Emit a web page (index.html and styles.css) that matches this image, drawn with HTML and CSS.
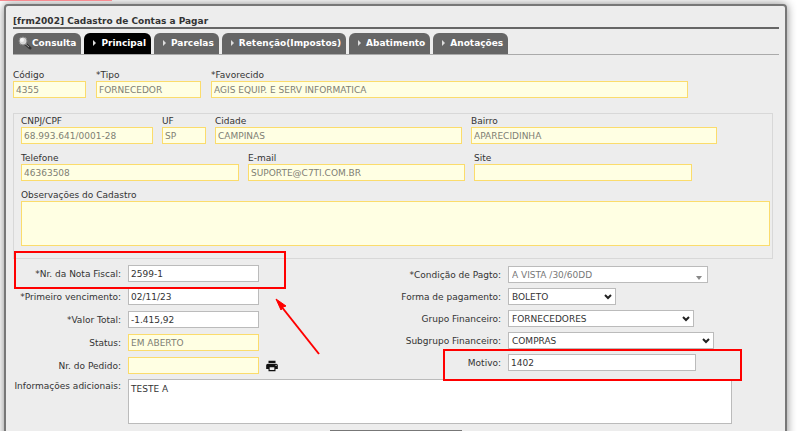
FILE: index.html
```html
<!DOCTYPE html>
<html lang="pt-BR">
<head>
<meta charset="utf-8">
<title>Cadastro de Contas a Pagar</title>
<link rel="stylesheet" href="styles.css">
</head>
<body>
<div class="alert-strip"></div>
<main class="panel">
  <h1 class="title">[frm2002] Cadastro de Contas a Pagar</h1>
  <nav class="tabs">
    <a class="tab tab-search" href="#"><svg class="lens" viewBox="0 0 14 14"><path d="M7.5 8 L12 12" stroke="#333" stroke-width="3" stroke-linecap="round"/><path d="M7 7.500 L11 11" stroke="#999" stroke-width="1"/><circle cx="5" cy="5" r="4" fill="#d6d6d6" stroke="#858585"/><circle cx="4" cy="4" r="2" fill="#f4f4f4"/></svg>Consulta</a>
    <a class="tab active" href="#"><span class="caret"></span>Principal</a>
    <a class="tab" href="#"><span class="caret"></span>Parcelas</a>
    <a class="tab" href="#"><span class="caret"></span>Retenção(Impostos)</a>
    <a class="tab" href="#"><span class="caret"></span>Abatimento</a>
    <a class="tab" href="#"><span class="caret"></span>Anotações</a>
  </nav>
  <form>
    <div class="fields fields-main">
      <div class="field"><label for="codigo">Código</label><input class="locked" id="codigo" value="4355" readonly></div>
      <div class="field"><label for="tipo">*Tipo</label><input class="locked" id="tipo" value="FORNECEDOR" readonly></div>
      <div class="field"><label for="favorecido">*Favorecido</label><input class="locked" id="favorecido" value="AGIS EQUIP. E SERV INFORMATICA" readonly></div>
    </div>
    <section class="supplier">
      <div class="fields fields-address">
        <div class="field"><label for="cnpj">CNPJ/CPF</label><input class="locked" id="cnpj" value="68.993.641/0001-28" readonly></div>
        <div class="field"><label for="uf">UF</label><input class="locked" id="uf" value="SP" readonly></div>
        <div class="field"><label for="cidade">Cidade</label><input class="locked" id="cidade" value="CAMPINAS" readonly></div>
        <div class="field"><label for="bairro">Bairro</label><input class="locked" id="bairro" value="APARECIDINHA" readonly></div>
      </div>
      <div class="fields fields-contact">
        <div class="field"><label for="telefone">Telefone</label><input class="locked" id="telefone" value="46363508" readonly></div>
        <div class="field"><label for="email">E-mail</label><input class="locked" id="email" value="SUPORTE@C7TI.COM.BR" readonly></div>
        <div class="field"><label for="site">Site</label><input class="locked" id="site" readonly></div>
      </div>
      <div class="field"><label for="obs">Observações do Cadastro</label><textarea class="locked" id="obs" readonly></textarea></div>
    </section>
    <div class="details">
      <div class="column">
        <div class="row"><label for="nota">*Nr. da Nota Fiscal:</label><input id="nota" value="2599-1"></div>
        <div class="row"><label for="vencimento">*Primeiro vencimento:</label><input id="vencimento" value="02/11/23"></div>
        <div class="row"><label for="valor">*Valor Total:</label><input id="valor" value="-1.415,92"></div>
        <div class="row"><label for="status">Status:</label><input class="locked" id="status" value="EM ABERTO" readonly></div>
        <div class="row"><label for="pedido">Nr. do Pedido:</label><input class="locked" id="pedido" readonly>
          <button class="print" type="button" aria-label="Imprimir"><svg viewBox="0 0 24 24"><path fill="#111" d="M19 8H5c-1.660 0-3 1.340-3 3v6h4v4h12v-4h4v-6c0-1.660-1.340-3-3-3zm-3 11H8v-5h8v5zm3-7c-.55 0-1-.45-1-1s.45-1 1-1 1 .45 1 1-.45 1-1 1zm-1-9H6v4h12V3z"/></svg></button>
        </div>
      </div>
      <div class="column column-finance">
        <div class="row"><label for="condicao">*Condição de Pagto:</label><span class="select w-condition"><select id="condicao"><option>A VISTA /30/60DD</option></select><svg class="triangle" viewBox="0 0 6 5"><path d="M0 1h6L3 5z" fill="#888"/></svg></span></div>
        <div class="row"><label for="forma">Forma de pagamento:</label><span class="select w-method"><select id="forma"><option>BOLETO</option></select><svg viewBox="0 0 8 6"><path d="M1 1l3 3 3-3" fill="none" stroke="#222" stroke-width="2"/></svg></span></div>
        <div class="row"><label for="grupo">Grupo Financeiro:</label><span class="select w-group"><select id="grupo"><option>FORNECEDORES</option></select><svg viewBox="0 0 8 6"><path d="M1 1l3 3 3-3" fill="none" stroke="#222" stroke-width="2"/></svg></span></div>
        <div class="row"><label for="subgrupo">Subgrupo Financeiro:</label><span class="select w-subgroup"><select id="subgrupo"><option>COMPRAS</option></select><svg viewBox="0 0 8 6"><path d="M1 1l3 3 3-3" fill="none" stroke="#222" stroke-width="2"/></svg></span></div>
        <div class="row"><label for="motivo">Motivo:</label><input class="w-reason" id="motivo" value="1402"></div>
      </div>
    </div>
    <div class="extra"><label for="info">Informações adicionais:</label><textarea id="info">TESTE A</textarea></div>
    <div class="actions"><button class="save" type="submit" aria-label="Gravar"></button></div>
  </form>
  <div class="mark mark-invoice"></div>
  <div class="mark mark-reason"></div>
  <svg class="arrow" viewBox="0 0 46 58"><path d="M6 8L44 56" stroke="#f00" stroke-width="2"/><path d="M1 1L11 8L8 9L6 12z" fill="#f00" stroke="#f00"/></svg>
</main>
</body>
</html>
```
FILE: styles.css
```css
* { box-sizing: border-box; }

body {
  margin: 0;
  padding: 4px 13px 0 4px;
  height: 100vh;
  overflow: hidden;
  background: #fff;
  color: #333;
  font: 9px/12px Verdana, "DejaVu Sans", sans-serif;
}

.alert-strip {
  position: absolute;
  top: 0;
  left: 0;
  z-index: 1;
  width: 14%;
  height: 1px;
  background: #f88c92;
}

.panel {
  position: relative;
  padding: 9px 6px 12px 7px;
  border: 2px solid #777;
  border-radius: 4px;
  background: #ededed;
  box-shadow: 0 0 10px #888;
}

.title {
  margin: 0 0 4px;
  border-bottom: 2px solid #666;
  font-size: 9px;
  line-height: 12px;
  font-weight: bold;
}

.tabs {
  display: flex;
  gap: 3px;
  border-bottom: 1px solid #aaa;
}

.tab {
  display: flex;
  align-items: center;
  height: 21px;
  padding: 0 5px 2px 9px;
  border-radius: 6px 6px 0 0;
  background: #666;
  color: #fff;
  font-weight: bold;
  text-decoration: none;
}

.tab.active { background: #000; }
.tab-search { padding-left: 5px; }

.lens { width: 14px; height: 14px; fill: none; }

.caret {
  margin-right: 5px;
  border: 3px solid transparent;
  border-left: 3px solid #ddd;
  border-right: 0;
}

.fields { display: grid; }

.fields-main {
  grid-template-columns: 73fr 105fr 477fr 81fr;
  gap: 10px;
  margin: 14px 0 15px;
}

.field { display: flex; flex-direction: column; }

.fields-address, .fields-contact { gap: 9px; margin-bottom: 8px; }
.fields-address { grid-template-columns: 132fr 44fr 247fr 246fr 44fr; }
.fields-contact { grid-template-columns: 218fr 217fr 218fr 69fr; }

input, select, textarea {
  display: block;
  width: 100%;
  height: 17px;
  margin: 0;
  padding: 0 2px;
  border: 1px solid #bbb;
  border-radius: 0;
  background: #fff;
  color: #333;
  font: inherit;
  outline: 0;
}

textarea { height: 45px; padding: 3px 2px; resize: none; }

.locked { border-color: #fbdc6c; background: #ffffe3; color: #808074; }

.supplier {
  margin-right: 6px;
  padding: 1px 2px 12px 7px;
  border: 1px solid #d8d8d8;
}

.details {
  display: grid;
  grid-template-columns: 380fr 386fr;
  margin: 6px 0 5px;
}

.column { display: flex; flex-direction: column; gap: 6px; }
.column-finance { gap: 5px; padding-top: 1px; }
.row { display: flex; align-items: center; height: 17px; }
.row label, .extra label { flex: none; width: 108px; margin-right: 7px; text-align: right; }
.row input { width: 131px; }

.print {
  width: 14px;
  height: 14px;
  margin-left: 6px;
  padding: 0;
  border: 0;
  background: none;
}
.print svg { display: block; width: 14px; height: 14px; }

.select { position: relative; }
.select select { appearance: none; padding-left: 3px; }
.select svg { position: absolute; top: 6px; right: 4px; width: 8px; height: 6px; }
.select .triangle { top: 9px; right: 6px; width: 6px; height: 5px; }
.w-condition select { color: #777; }

.w-condition { width: 200px; }
.w-method { width: 108px; }
.w-group { width: 186px; }
.w-subgroup { width: 206px; }
.row .w-reason { width: 188px; }

.extra { display: flex; margin-right: 47px; }
.extra label { margin-top: 1px; }

.actions { display: flex; justify-content: center; margin-top: 6px; }
.save { width: 132px; height: 20px; border: 0; background: #777; }

.mark { position: absolute; border: 2px solid #f00; }
.mark-invoice { top: 245px; left: 8px; width: 272px; height: 38px; }
.mark-reason { top: 343px; left: 437px; width: 299px; height: 32px; }
.arrow { position: absolute; top: 292px; left: 269px; width: 46px; height: 58px; }
```
